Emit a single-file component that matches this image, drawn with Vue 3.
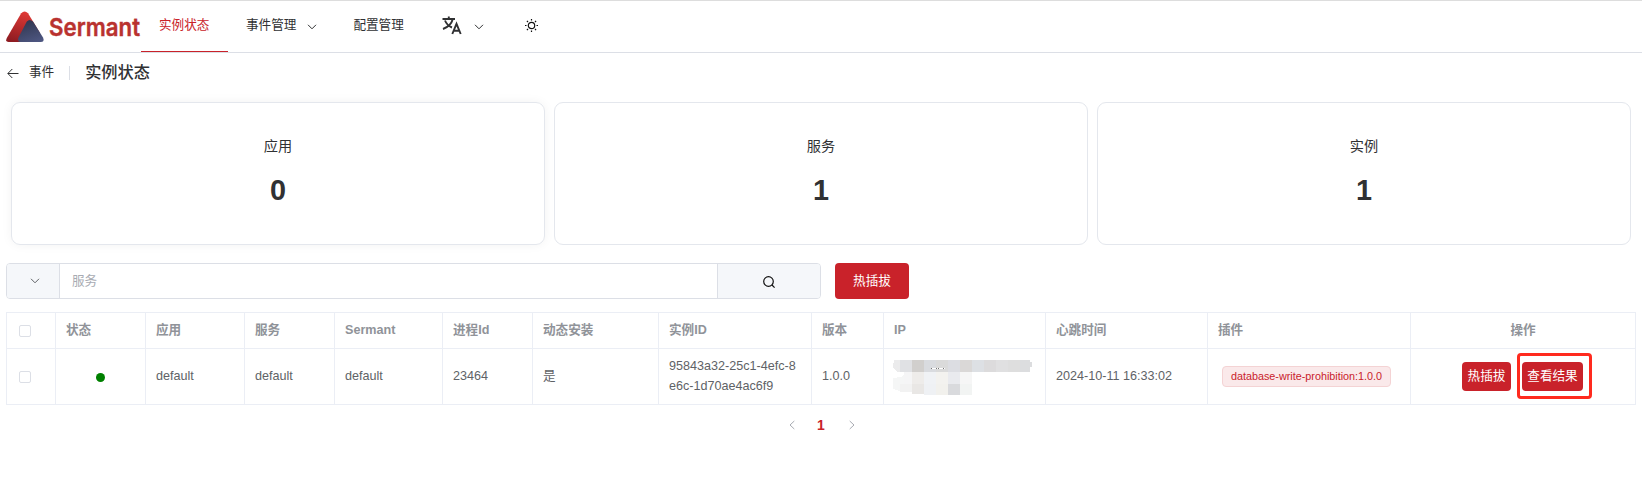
<script setup>
const cards = [
  { label: '应用', value: 0, raised: true },
  { label: '服务', value: 1 },
  { label: '实例', value: 1 }
]
const widths = [49, 90, 99, 90, 108, 90, 126, 153, 72, 162, 162, 203, 225]
const headers = ['状态', '应用', '服务', 'Sermant', '进程Id', '动态安装', '实例ID', '版本', 'IP', '心跳时间', '插件']
// Masked address: [x, y, width, height, fill]
const mask = [
  [7, 0, 12, 12, '#e0e1e4'], [19, 0, 12, 12, '#d1cfcd'], [31, 0, 12, 12, '#d9dbdf'],
  [43, 0, 12, 12, '#dadada'], [55, 0, 12, 12, '#dcdde2'], [67, 0, 12, 12, '#dad8d7'],
  [79, 0, 12, 12, '#dde0e4'], [91, 0, 12, 12, '#dcdbdc'], [103, 0, 12, 12, '#e0e0e1'],
  [115, 0, 12, 12, '#dedede'], [127, 0, 10, 12, '#dcdddf'], [137, 2, 2, 5, '#dcdddf'],
  [11, 12, 8, 12, '#f5f5f6'], [19, 12, 12, 12, '#eeecea'], [31, 12, 12, 12, '#f0f2f5'],
  [43, 12, 12, 12, '#f3f2ef'], [55, 12, 12, 12, '#e9eaee'], [67, 12, 12, 12, '#f6f6f6'],
  [7, 24, 12, 8, '#f2f2f2'], [19, 24, 12, 10, '#e9e7e5'], [31, 24, 12, 11, '#eff1f4'],
  [43, 24, 12, 11, '#f2f1ed'], [55, 24, 12, 11, '#d9dadd'], [67, 24, 12, 11, '#f2f4f3']
]
</script>

<template>
  <div class="page">
    <header class="topbar">
      <div class="logo">
        <svg width="38" height="32" viewBox="0 0 38 32">
          <defs>
            <linearGradient id="lr" x1="0.6" y1="0" x2="0.3" y2="1">
              <stop offset="0" stop-color="#e23a36" /><stop offset="1" stop-color="#8f1c22" />
            </linearGradient>
            <linearGradient id="lb" x1="0.3" y1="0" x2="0.7" y2="1">
              <stop offset="0" stop-color="#30364f" /><stop offset="1" stop-color="#4d5680" />
            </linearGradient>
          </defs>
          <path d="M15.200 2.200Q18.700-1.400 22 2.200L34 22V31H2.500Q-1 31 .8 27Z" fill="url(#lr)" />
          <path d="M20.800 10.500Q23.500 7.500 27 10.500L37 26.500Q39 31 35 31H14.500Q11 31 12.500 26.500Z" fill="url(#lb)" />
        </svg>
        <svg class="word" width="93" height="38" viewBox="0 0 93 38">
          <text x="0" y="27.500" textLength="91" lengthAdjust="spacingAndGlyphs">Sermant</text>
        </svg>
      </div>
      <nav class="menu">
        <a class="item active">实例状态</a>
        <a class="item">事件管理
          <svg class="chev" viewBox="0 0 10 6"><path d="M1 .8 5 4.800 9 .8" /></svg>
        </a>
        <a class="item">配置管理</a>
        <a class="item lang">
          <svg width="20" height="19" viewBox="0 0 20 19" fill="none" stroke="#303133" stroke-width="1.900">
            <path d="M.5 3H13M6.800 .5V3M3 4.500Q5 9.500 10 11.500M10.800 3Q9 10 1 13" />
            <path d="M10.300 18 14.500 7.800 18.700 18M11.700 14.800H17.300" />
          </svg>
          <svg class="chev" viewBox="0 0 10 6"><path d="M1 .8 5 4.800 9 .8" /></svg>
        </a>
        <a class="item theme">
          <svg width="13" height="13" viewBox="0 0 13 13" fill="none" stroke="#111" stroke-width="1.200">
            <circle cx="6.500" cy="6.500" r="3.200" />
            <path d="M6.500 0V1.500M6.500 11.500V13M0 6.500H1.500M11.500 6.500H13M1.900 1.900 3 3M10 10 11.100 11.100M1.900 11.100 3 10M10 3 11.100 1.900" />
          </svg>
        </a>
      </nav>
    </header>

    <div class="crumb">
      <svg class="back" width="12" height="11" viewBox="0 0 12 11"><path d="M11.500 5.500H1M5.300 1 .8 5.500 5.300 10" /></svg>
      <span class="from">事件</span>
      <i class="bar"></i>
      <h1>实例状态</h1>
    </div>

    <section class="cards">
      <div v-for="c in cards" :key="c.label" class="card" :class="{ raised: c.raised }">
        <div class="label">{{ c.label }}</div>
        <div class="value">{{ c.value }}</div>
      </div>
    </section>

    <div class="tools">
      <div class="search">
        <div class="pre"><svg class="chev" viewBox="0 0 10 6"><path d="M1 .8 5 4.800 9 .8" /></svg></div>
        <div class="field">服务</div>
        <div class="post">
          <svg width="12" height="12" viewBox="0 0 12 12" fill="none" stroke="#111" stroke-width="1.200">
            <circle cx="5.500" cy="5.500" r="4.800" /><path d="M9 9 11.600 11.600" />
          </svg>
        </div>
      </div>
      <button class="btn big">热插拔</button>
    </div>

    <table>
      <colgroup><col v-for="(w, i) in widths" :key="i" :style="{ width: w + 'px' }" /></colgroup>
      <thead>
        <tr>
          <th><i class="check"></i></th>
          <th v-for="h in headers" :key="h">{{ h }}</th>
          <th class="center">操作</th>
        </tr>
      </thead>
      <tbody>
        <tr>
          <td><i class="check"></i></td>
          <td><i class="dot"></i></td>
          <td>default</td>
          <td>default</td>
          <td>default</td>
          <td>23464</td>
          <td>是</td>
          <td class="id">95843a32-25c1-4efc-8e6c-1d70ae4ac6f9</td>
          <td>1.0.0</td>
          <td class="ip">
            <svg width="140" height="35" viewBox="0 0 140 35" shape-rendering="crispEdges">
              <path d="M1 0H7V12H4L0 7Z" fill="#ebebec" />
              <path d="M0 18 8 17 11 14V24H7V31L0 29Z" fill="#f5f6f6" />
              <rect v-for="(m, i) in mask" :key="i" :x="m[0]" :y="m[1]" :width="m[2]" :height="m[3]" :fill="m[4]" />
              <path d="M38 8.500H52" stroke="#fff" />
              <path d="M38 8.500H52" stroke="#777" stroke-dasharray="1 4 1 1" />
            </svg>
          </td>
          <td>2024-10-11 16:33:02</td>
          <td><span class="tag">database-write-prohibition:1.0.0</span></td>
          <td>
            <div class="ops">
              <button class="btn">热插拔</button>
              <span class="marked"><button class="btn">查看结果</button></span>
            </div>
          </td>
        </tr>
      </tbody>
    </table>

    <div class="pager">
      <svg width="6" height="10" viewBox="0 0 6 10"><path d="M5.300 1 1 5 5.300 9" /></svg>
      <span>1</span>
      <svg width="6" height="10" viewBox="0 0 6 10"><path d="M.7 1 5 5 .7 9" /></svg>
    </div>
  </div>
</template>

<style>
body { background: #fff; }
</style>

<style scoped>
* { box-sizing: border-box; }
.page {
  height: 499px; overflow: hidden; color: #303133;
  font: 12.6px/20px "Liberation Sans", "Noto Sans CJK SC", sans-serif;
}
.topbar { display: flex; height: 53px; border-top: 1px solid #ddd; border-bottom: 1px solid #dcdfe6; }
.logo { display: flex; width: 141px; padding: 10px 0 0 6px; }
.logo svg { flex: none; }
.word { margin: -3px 0 0 5px; overflow: visible; }
.word text { font: 600 24.500px Inter, sans-serif; fill: #b9322f; stroke: #b9322f; stroke-width: .4; }
.menu { display: flex; height: 51px; }
.item { display: flex; align-items: center; padding: 0 18px 3px; white-space: nowrap; }
.active { width: 87px; color: #c9222a; border-bottom: 1px solid #c9222a; padding-bottom: 2px; }
.chev { width: 10px; height: 6px; fill: none; stroke: #303133; margin: 3px 0 0 11px; }
.lang { padding-left: 20px; }
.lang .chev { margin-left: 12px; }
.theme { padding-left: 23px; }
.crumb { display: flex; align-items: center; height: 38px; padding-left: 7px; }
.back { fill: none; stroke: #303133; margin-top: 3px; }
.from { margin-left: 10px; }
.bar { width: 1px; height: 14px; background: #dcdfe6; margin: 1px 15px 0 15px; }
h1 { margin: 0; font-size: 16.2px; font-weight: 500; line-height: 24px; }
.cards { display: grid; grid-template-columns: repeat(3, 1fr); gap: 9px; margin: 11px 11px 0; height: 143px; }
.card { border: 1px solid #e4e7ed; border-radius: 9px; text-align: center; padding-top: 32px; }
.raised { box-shadow: 0 0 11px rgba(0, 0, 0, .05); }
.label { font-size: 14.2px; line-height: 22px; }
.value { font-size: 28.8px; font-weight: 700; line-height: 34px; margin-top: 16px; }
.tools { display: flex; margin: 18px 0 0 6px; height: 36px; }
.search { display: flex; width: 815px; border: 1px solid #dcdfe6; border-radius: 4px; overflow: hidden; margin-right: 14px; }
.pre, .post { display: flex; align-items: center; background: #f5f7fa; }
.pre { width: 53px; border-right: 1px solid #dcdfe6; padding-left: 12px; padding-bottom: 4px; }
.pre .chev { stroke: #606266; }
.post { width: 103px; border-left: 1px solid #dcdfe6; padding: 1px 0 0 45px; }
.field { flex: 1; padding-left: 12px; line-height: 34px; color: #a8abb2; }
.btn {
  height: 29px; width: 49px; padding: 0 0 1px; border: 0; border-radius: 4px; background: #c9222a; color: #fff;
  font: inherit; white-space: nowrap;
}
.big { width: 74px; height: 36px; }
table {
  width: 1630px; margin: 13px 0 0 6px; table-layout: fixed; border-collapse: separate; border-spacing: 0;
  border-left: 1px solid #ebeef5; border-top: 1px solid #ebeef5; color: #606266;
}
th, td { padding: 0 10px; border-right: 1px solid #ebeef5; border-bottom: 1px solid #ebeef5; text-align: left; white-space: nowrap; }
th { height: 36px; padding-bottom: 1px; color: #909399; font-weight: 700; }
td { height: 56px; padding-bottom: 1px; }
th.center { text-align: center; }
.check { display: block; width: 12px; height: 12px; margin: 2px 0 0 2px; border: 1px solid #dcdfe6; border-radius: 2px; }
.dot { display: block; width: 9px; height: 9px; margin: 2px auto 0; border-radius: 50%; background: green; }
td.id { white-space: normal; word-break: break-all; }
td.ip { padding: 0 0 0 9px; }
.ip svg { display: block; margin-top: 2px; }
.tag {
  display: block; width: 169px; height: 21px; margin: 1px 0 0 4px; border: 1px solid #f4d3d4; border-radius: 4px;
  background: #fae9ea; color: #c9222a; font-size: 10.8px; line-height: 19px; text-align: center;
}
.ops { display: flex; align-items: center; gap: 6px; margin-left: 41px; }
.ops > .btn { margin-top: 1px; }
.marked { padding: 6px 6px 5px 2px; border: 3px solid #ff2a1e; border-radius: 4px; }
.marked .btn { display: block; width: 61px; }
.pager { display: flex; align-items: center; padding: 10px 0 0 789px; gap: 22px; }
.pager svg { fill: none; stroke: #a8abb2; }
.pager span { width: 8px; margin-right: 2px; font-size: 14px; font-weight: 700; line-height: 20px; color: #c9222a; }
</style>
